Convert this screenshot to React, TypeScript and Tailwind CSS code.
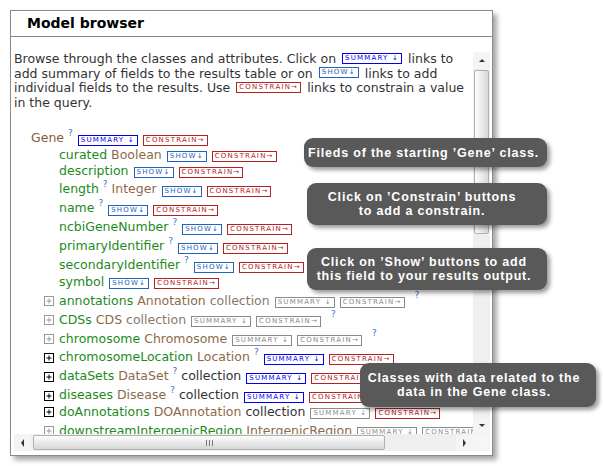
import type { ReactNode } from 'react';

type BadgeKind = 'summary' | 'summaryOff' | 'show' | 'constrain' | 'constrainOff';

const badgeStyles: Record<BadgeKind, { label: string; cls: string }> = {
  summary: { label: 'SUMMARY ↓', cls: 'border-[#0000ee] text-[#0000ee]' },
  summaryOff: { label: 'SUMMARY ↓', cls: 'border-[#8a8a8a] text-[#8a8a8a]' },
  show: { label: 'SHOW↓', cls: 'border-[#2362bd] text-[#2362bd]' },
  constrain: { label: 'CONSTRAIN→', cls: 'border-[#b22222] text-[#b22222]' },
  constrainOff: { label: 'CONSTRAIN→', cls: 'border-[#8a8a8a] text-[#8a8a8a]' },
};

function Badge({ kind, inline }: { kind: BadgeKind; inline?: boolean }) {
  const b = badgeStyles[kind];
  return (
    <span
      className={`${inline ? 'inline-flex align-middle mx-[2px] -mt-[3px]' : 'flex ml-[5px] mt-[4px]'} shrink-0 items-center h-[11px] px-[2px] border text-[7px] leading-none tracking-[1.2px] font-['DejaVu_Sans',sans-serif] ${b.cls}`}
    >
      {b.label}
    </span>
  );
}

function Q() {
  return <span className="relative -top-[6px] text-[9px] text-[#3a6fc4]">?</span>;
}

const G = ({ children }: { children: ReactNode }) => <span className="text-[#1d8a1d]">{children}</span>;
const B = ({ children }: { children: ReactNode }) => <span className="text-[#8c6a48]">{children}</span>;

function PlusBox({ dark }: { dark?: boolean }) {
  const c = dark ? '#000' : '#9a9a9a';
  return (
    <svg width="10" height="10" viewBox="0 0 10 10" className="shrink-0 mr-[5px]">
      <rect x="0.5" y="0.5" width="9" height="9" fill="white" stroke={c} />
      <path d="M2.5 5H7.5M5 2.5V7.5" stroke={c} />
    </svg>
  );
}

type RowProps = {
  level: 'root' | 'field' | 'box';
  dark?: boolean;
  q?: boolean;
  badges: BadgeKind[];
  tailQ?: boolean;
  children: ReactNode;
};

function Row({ level, dark, q, badges, tailQ, children }: RowProps) {
  const pad = level === 'root' ? 'pl-[17px]' : level === 'field' ? 'pl-[45px]' : 'pl-[30px]';
  return (
    <div className={q ? 'pt-[3px]' : ''}>
      <div className={`flex items-center h-[16px] whitespace-nowrap ${pad}`}>
        {level === 'box' && <PlusBox dark={dark} />}
        <span className="leading-[16px]">{children}</span>
        {badges.map((k, i) => (
          <Badge key={i} kind={k} />
        ))}
        {tailQ && (
          <span className="ml-[10px]">
            <Q />
          </span>
        )}
      </div>
    </div>
  );
}

function Arrow({ dir }: { dir: 'up' | 'down' | 'left' | 'right' }) {
  const pts = {
    up: '1,4 4,1 7,4',
    down: '1,1 4,4 7,1',
    left: '4,0 1,4 4,8',
    right: '1,0 4,4 1,8',
  }[dir];
  const vertical = dir === 'up' || dir === 'down';
  return (
    <svg width={vertical ? 8 : 5} height={vertical ? 5 : 8} viewBox={vertical ? '0 0 8 5' : '0 0 5 8'}>
      <polygon points={pts} fill="#333" />
    </svg>
  );
}

function VScroll() {
  return (
    <div className="w-[17px] flex flex-col bg-[#efefef]">
      <div className="h-[17px] flex items-center justify-center bg-[#f4f4f4]">
        <Arrow dir="up" />
      </div>
      <div className="h-[164px] mx-[1px] mt-[1px] rounded-[2px] border border-[#b0b0b0] bg-gradient-to-r from-[#fdfdfd] to-[#d9d9d9]" />
      <div className="flex-1" />
      <div className="h-[17px] flex items-center justify-center bg-[#f4f4f4]">
        <Arrow dir="down" />
      </div>
    </div>
  );
}

function HScroll() {
  return (
    <div className="h-[17px] flex">
      <div className="w-[459px] flex bg-[#efefef]">
        <div className="w-[17px] flex items-center justify-center bg-[#f4f4f4]">
          <Arrow dir="left" />
        </div>
        <div className="w-[352px] my-[1px] ml-[2px] rounded-[2px] border border-[#b0b0b0] bg-gradient-to-b from-[#fdfdfd] to-[#d6d6d6] flex items-center justify-center gap-[2px]">
          <span className="w-px h-[6px] bg-[#777]" />
          <span className="w-px h-[6px] bg-[#777]" />
          <span className="w-px h-[6px] bg-[#777]" />
        </div>
        <div className="flex-1" />
        <div className="w-[17px] flex items-center justify-center bg-[#f4f4f4]">
          <Arrow dir="right" />
        </div>
      </div>
      <div className="w-[17px] bg-[#f6f6f6]" />
    </div>
  );
}

function Tip({ className, children }: { className: string; children: ReactNode }) {
  return (
    <div
      className={`absolute flex flex-col items-center justify-center rounded-[9px] bg-[#595959] text-white font-bold text-[12.5px] leading-[14px] tracking-[0.8px] font-['Liberation_Sans',sans-serif] shadow-[3px_3px_4px_rgba(0,0,0,0.4)] ${className}`}
    >
      {children}
    </div>
  );
}

export default function App() {
  return (
    <div className="relative w-[603px] h-[466px] bg-white font-['DejaVu_Sans',sans-serif] text-[#333]">
      <div className="pt-[10px] pl-[10px]">
        <div className="w-[483px] h-[446px] flex flex-col border border-[#8a8a8a] bg-white shadow-[4px_4px_5px_rgba(0,0,0,0.35)]">
          <div className="h-[26px] shrink-0 flex items-center pl-[16px] border-b border-[#8a8a8a] text-[14px] font-bold text-black">
            Model browser
          </div>
          <div className="flex-1 min-h-0 flex flex-col pt-[15px] pl-[3px] pr-[1px] pb-[4px]">
            <div className="flex flex-1 min-h-0">
              <div className="w-[459px] overflow-hidden text-[12.5px]">
                <div className="leading-[14.7px] whitespace-nowrap">
                  <div>
                    Browse through the classes and attributes. Click on <Badge kind="summary" inline /> links to
                  </div>
                  <div>
                    add summary of fields to the results table or on <Badge kind="show" inline /> links to add
                  </div>
                  <div>
                    individual fields to the results. Use <Badge kind="constrain" inline /> links to constrain a value
                  </div>
                  <div>in the query.</div>
                </div>

                <div className="mt-[17px]">
                  <Row level="root" q badges={['summary', 'constrain']}>
                    <span className="text-[#7f5f3f]">Gene</span> <Q />
                  </Row>
                  <Row level="field" badges={['show', 'constrain']}>
                    <G>curated</G> <B>Boolean</B>
                  </Row>
                  <Row level="field" badges={['show', 'constrain']}>
                    <G>description</G>
                  </Row>
                  <Row level="field" q badges={['show', 'constrain']}>
                    <G>length</G> <Q /> <B>Integer</B>
                  </Row>
                  <Row level="field" q badges={['show', 'constrain']}>
                    <G>name</G> <Q />
                  </Row>
                  <Row level="field" q badges={['show', 'constrain']}>
                    <G>ncbiGeneNumber</G> <Q />
                  </Row>
                  <Row level="field" q badges={['show', 'constrain']}>
                    <G>primaryIdentifier</G> <Q />
                  </Row>
                  <Row level="field" q badges={['show', 'constrain']}>
                    <G>secondaryIdentifier</G> <Q />
                  </Row>
                  <Row level="field" badges={['show', 'constrain']}>
                    <G>symbol</G>
                  </Row>
                  <Row level="box" q tailQ badges={['summaryOff', 'constrainOff']}>
                    <G>annotations</G> <B>Annotation</B> <span className="text-[#887868]">collection</span>
                  </Row>
                  <Row level="box" q tailQ badges={['summaryOff', 'constrainOff']}>
                    <G>CDSs</G> <B>CDS</B> <span className="text-[#887868]">collection</span>
                  </Row>
                  <Row level="box" q tailQ badges={['summaryOff', 'constrainOff']}>
                    <G>chromosome</G> <B>Chromosome</B>
                  </Row>
                  <Row level="box" dark q badges={['summary', 'constrain']}>
                    <G>chromosomeLocation</G> <B>Location</B> <Q />
                  </Row>
                  <Row level="box" dark q badges={['summary', 'constrain']}>
                    <G>dataSets</G> <B>DataSet</B> <Q /> <span className="text-[#333]">collection</span>
                  </Row>
                  <Row level="box" dark q badges={['summary', 'constrain']}>
                    <G>diseases</G> <B>Disease</B> <Q /> <span className="text-[#333]">collection</span>
                  </Row>
                  <Row level="box" dark badges={['summaryOff', 'constrain']}>
                    <G>doAnnotations</G> <B>DOAnnotation</B> <span className="text-[#333]">collection</span>
                  </Row>
                  <Row level="box" q tailQ badges={['summaryOff', 'constrainOff']}>
                    <G>downstreamIntergenicRegion</G> <B>IntergenicRegion</B>
                  </Row>
                </div>
              </div>
              <VScroll />
            </div>
            <HScroll />
          </div>
        </div>
      </div>

      <Tip className="left-[304px] top-[138px] w-[243px] h-[29px] pr-[4px]">
        <span>Fileds of the starting ’Gene’ class.</span>
      </Tip>
      <Tip className="left-[307px] top-[183px] w-[240px] h-[42px] pr-[10px]">
        <span>Click on ’Constrain’ buttons</span>
        <span>to add a constrain.</span>
      </Tip>
      <Tip className="left-[307px] top-[248px] w-[240px] h-[42px] pr-[6px]">
        <span>Click on ’Show’ buttons to add</span>
        <span>this field to your results output.</span>
      </Tip>
      <Tip className="left-[360px] top-[363px] w-[236px] h-[44px] pr-[8px]">
        <span>Classes with data related to the</span>
        <span>data in the Gene class.</span>
      </Tip>
    </div>
  );
}
